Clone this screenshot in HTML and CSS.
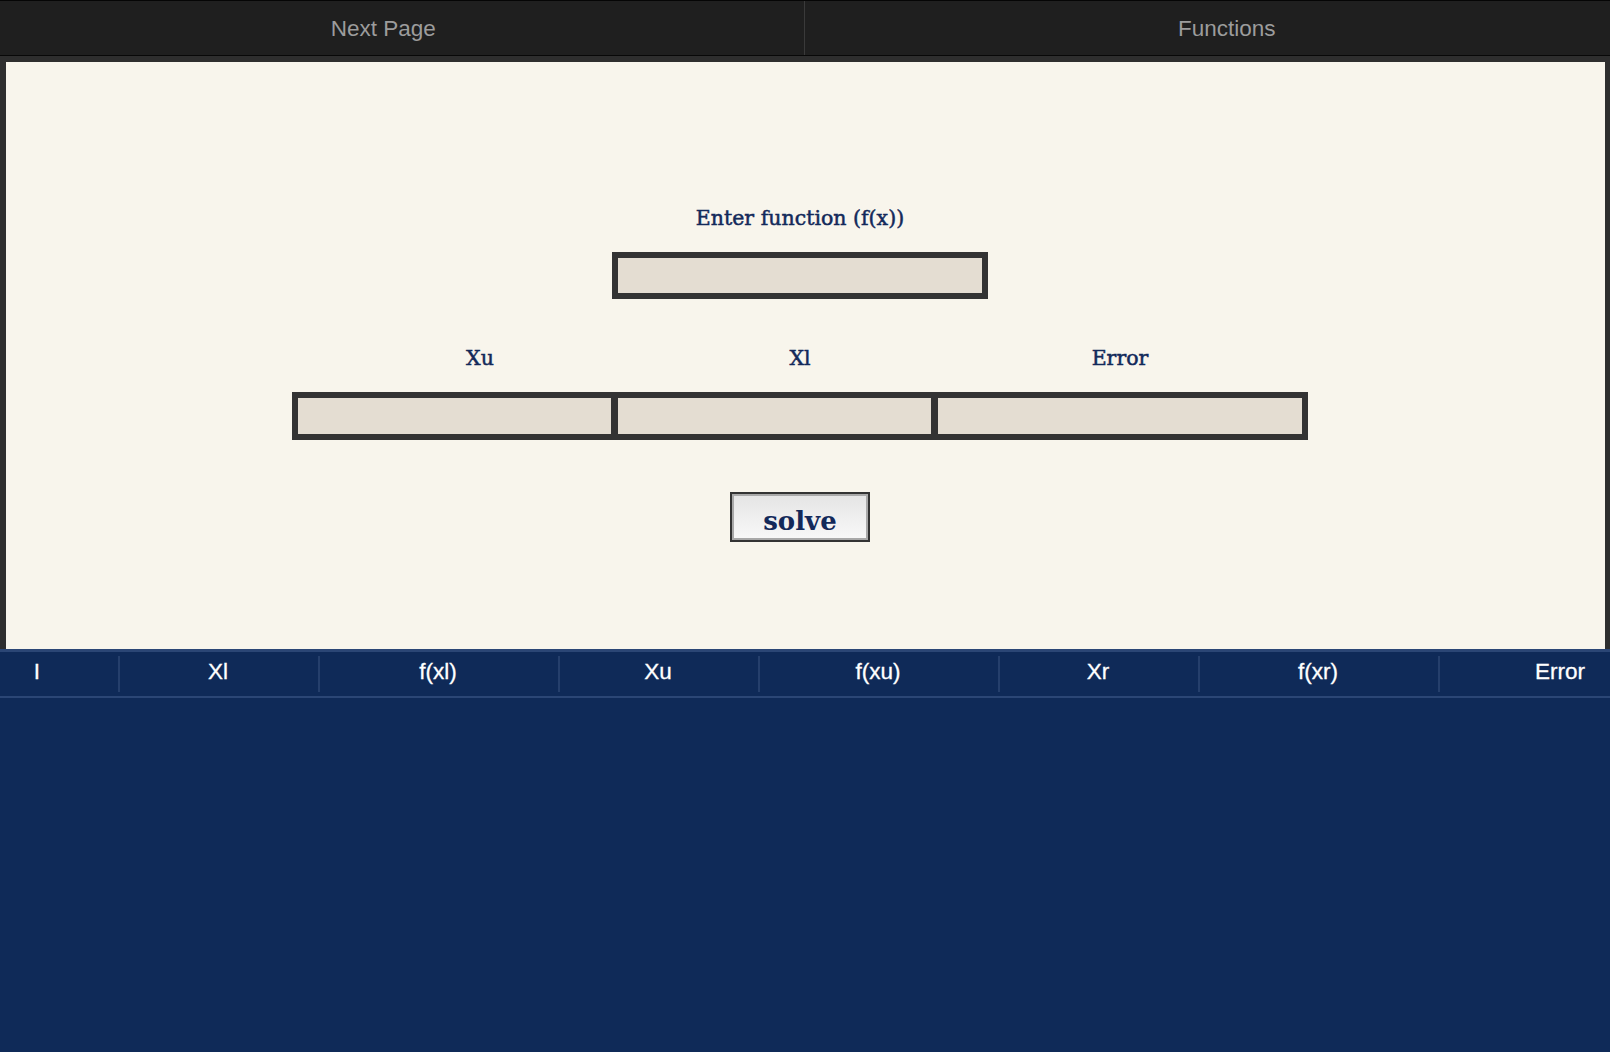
FILE: index.html
```html
<!DOCTYPE html>
<html lang="en">
<head>
<meta charset="utf-8">
<title>Bisection</title>
<link rel="stylesheet" href="styles.css">
</head>
<body>
<nav class="topnav">
  <a class="navlink navlink-left" href="#">Next Page</a>
  <a class="navlink navlink-right" href="#">Functions</a>
</nav>
<main class="panel">
  <div class="panel-inner">
    <label class="label fn-label" for="fx">Enter function (f(x))</label>
    <input class="field fn-field" id="fx" type="text">
    <div class="label-row">
      <span class="label">Xu</span>
      <span class="label">Xl</span>
      <span class="label">Error</span>
    </div>
    <div class="field-row">
      <input class="cell-field cell-a" type="text">
      <input class="cell-field cell-b" type="text">
      <input class="cell-field cell-c" type="text">
    </div>
    <button class="solve" type="button">solve</button>
  </div>
</main>
<section class="results">
  <div class="thead">
    <div class="th th-first">I</div>
    <div class="th">Xl</div>
    <div class="th">f(xl)</div>
    <div class="th">Xu</div>
    <div class="th">f(xu)</div>
    <div class="th">Xr</div>
    <div class="th">f(xr)</div>
    <div class="th th-last">Error</div>
  </div>
</section>
</body>
</html>
```
FILE: styles.css
```css
* { box-sizing: border-box; }
html, body { margin: 0; padding: 0; }
body {
  background: #0f2a58;
  min-height: 1052px;
  font-family: "Liberation Sans", Arial, sans-serif;
  display: flex;
  flex-direction: column;
}
.topnav {
  display: flex;
  height: 56px;
  background: #1f1f1f;
  border-top: 1px solid #050505;
  border-bottom: 1px solid #080808;
}
.navlink {
  flex: 1;
  text-align: center;
  color: #9c9c9c;
  text-decoration: none;
  font-size: 22.5px;
  line-height: 54px;
  padding-top: 1px;
}
.navlink-left { padding-right: 37px; border-right: 1px solid #3a3a3a; }
.navlink-right { padding-left: 39px; }

.panel {
  background: #f8f5ec;
  border: solid #2e2e2e;
  border-width: 6px 5px 0 6px;
  height: 593px;
}
.panel-inner {
  display: flex;
  flex-direction: column;
  align-items: center;
  padding: 142px 11px 0 0;
}
.label {
  font-family: "DejaVu Serif", "Liberation Serif", serif;
  font-size: 20.5px;
  line-height: 28px;
  color: #13295a;
  -webkit-text-stroke: 0.5px #13295a;
  text-align: center;
}
.fn-field {
  margin-top: 20px;
  width: 376px;
  height: 47px;
  border: 6px solid #333333;
  background: #e4ddd2;
  outline: none;
}
.label-row {
  margin-top: 45px;
  display: grid;
  grid-template-columns: 320px 320px 320px;
}
.field-row {
  margin-top: 20px;
  display: flex;
  width: 1016px;
  height: 48px;
  border: 6px solid #333333;
  background: #333333;
}
.cell-field {
  border: 0;
  outline: none;
  background: #e4ddd2;
  height: 100%;
  margin: 0;
  padding: 0;
}
.cell-a { width: 313px; }
.cell-b { width: 313px; margin-left: 7px; }
.cell-c { flex: 1; margin-left: 7px; }
.solve {
  margin-top: 52px;
  width: 140px;
  height: 50px;
  border: 2px solid #333333;
  box-shadow: inset 0 0 0 2px #a9a9a9;
  background: linear-gradient(#e4e4e4, #f9f9f9);
  font-family: "DejaVu Serif", "Liberation Serif", serif;
  font-weight: bold;
  font-size: 26px;
  line-height: 38px;
  padding: 8px 0 0 0;
  color: #13295a;
}
.results {
  flex: 1;
  background: #0f2a58;
}
.thead {
  display: grid;
  grid-template-columns: 118px 200px 240px 200px 240px 200px 240px 1fr;
  border-top: 3px solid #2b4675;
  border-bottom: 2px solid #2b4675;
  height: 49px;
}
.th {
  color: #ffffff;
  font-size: 22.5px;
  line-height: 40px;
  padding-bottom: 4px;
  text-align: center;
  position: relative;
  -webkit-text-stroke: 0.3px #ffffff;
}
.th + .th::before {
  content: "";
  position: absolute;
  left: 0;
  top: 4px;
  bottom: 4px;
  width: 2px;
  background: #253f6c;
}
.th-first { padding-right: 44px; }
.th-last { padding-left: 72px; }
```
